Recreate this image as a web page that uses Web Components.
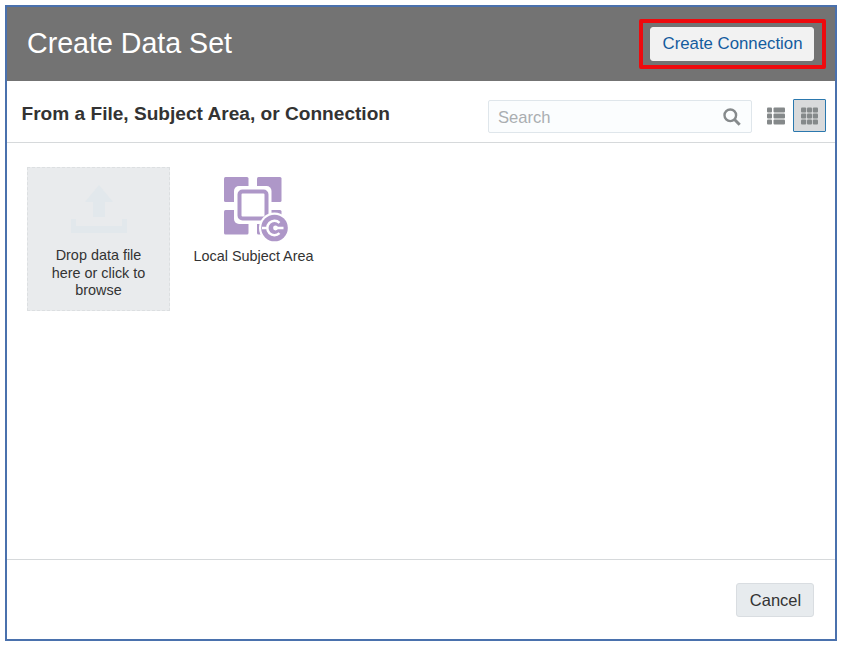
<!DOCTYPE html>
<html lang="en">
<head>
<meta charset="utf-8">
<title>Create Data Set</title>
<style>
html,body{margin:0;background:#fff}
body{width:842px;height:646px;overflow:hidden;font-family:"Liberation Sans",Arial,sans-serif;color:#333}
</style>
</head>
<body>
<data-dialog></data-dialog>
<script>
function define(name, html) {
  const template = document.createElement('template');
  template.innerHTML = html;
  customElements.define(name, class extends HTMLElement {
    constructor() {
      super();
      this.attachShadow({mode: 'open'}).append(template.content.cloneNode(true));
    }
  });
}

define('ui-button', `<style>
:host{display:block;flex:none}
button{display:block;box-sizing:border-box;width:100%;height:34px;padding:0 0 0 1px;margin:0;border:1px solid #d9dde1;border-radius:3px;background:#e7ebee;color:#333;font:16.5px/32px "Liberation Sans",Arial,sans-serif;text-align:center;white-space:nowrap}
:host([kind=light]) button{background:#f2f2f2;border-color:#f2f2f2;color:#145c9e;font-size:16.8px}
</style><button><slot></slot></button>`);

define('dialog-header', `<style>
:host{display:flex;box-sizing:border-box;height:74px;flex:none;background:#737373;justify-content:space-between;padding:12px 9px 0 20px}
h1{margin:0;font-weight:400;font-size:28.6px;line-height:34px;color:#fff;padding-top:7px;white-space:nowrap}
.mark{box-sizing:border-box;width:187px;height:50px;border:4px solid #ee0a0e;border-radius:2px;padding:4px 8px 0 7px}
</style><h1><slot></slot></h1><div class="mark"><slot name="action"></slot></div>`);

define('search-field', `<style>
:host{display:flex;box-sizing:border-box;width:264px;height:33px;border:1px solid #dfe6eb;border-radius:2px;background:#fbfdfe;align-items:center;justify-content:space-between;padding:0 10px 0 9px;color:#aaaeb1;font-size:16.6px}
span{padding-top:3px}
svg{display:block}
</style><span><slot></slot></span>
<svg width="18" height="18" viewBox="0 0 18 18" fill="none" stroke="#868a8c"><circle cx="7.3" cy="7.3" r="5.8" stroke-width="2.4"/><path d="M11.5 11.5l5.2 5.2" stroke-width="3"/></svg>`);

define('view-switch', `<style>
:host{display:flex}
div{box-sizing:border-box;width:33px;height:33px;border:1px solid transparent;display:grid;place-items:center;border-radius:1px}
.on{background:#d9dadb;border-color:#2b78ae}
svg{display:block}
</style>
<div><svg width="19" height="18" viewBox="0 0 19 18" fill="#85898a"><rect x="0" y="0.5" width="5" height="5" rx="1"/><rect x="6.5" y="0.5" width="11.5" height="5" rx="1"/><rect x="0" y="6.5" width="5" height="5" rx="1"/><rect x="6.5" y="6.5" width="11.5" height="5" rx="1"/><rect x="0" y="12.5" width="5" height="5" rx="1"/><rect x="6.5" y="12.5" width="11.5" height="5" rx="1"/></svg></div>
<div class="on"><svg width="18" height="18" viewBox="0 0 18 18" fill="#85898a"><rect x="0" y=".5" width="5.2" height="5" rx="1"/><rect x="6" y=".5" width="5" height="5" rx="1"/><rect x="11.8" y=".5" width="5.2" height="5" rx="1"/><rect x="0" y="6.5" width="5.2" height="5" rx="1"/><rect x="6" y="6.5" width="5" height="5" rx="1"/><rect x="11.8" y="6.5" width="5.2" height="5" rx="1"/><rect x="0" y="12.5" width="5.2" height="5" rx="1"/><rect x="6" y="12.5" width="5" height="5" rx="1"/><rect x="11.8" y="12.5" width="5.2" height="5" rx="1"/></svg></div>`);

define('source-toolbar', `<style>
:host{display:flex;box-sizing:border-box;height:62px;flex:none;border-bottom:1px solid #d6d9db;padding:18px 9px 0 14.5px}
h2{margin:0;flex:1;font-size:19.1px;line-height:30px;color:#333;white-space:nowrap}
search-field{margin:1px 8px 0 0}
</style><h2><slot></slot></h2><search-field>Search</search-field><view-switch></view-switch>`);

define('drop-tile', `<style>
:host{display:flex;box-sizing:border-box;width:143px;height:144px;border:1px dashed #dcdfe1;background:#e9ebed;flex-direction:column;align-items:center;padding:17px 20px 0;text-align:center;font-size:14.4px;line-height:17.6px}
svg{display:block;margin-bottom:14px;flex:none}
p{margin:0;white-space:nowrap}
</style><svg width="58" height="48" viewBox="0 0 58 48" fill="#e2e8ec"><path d="M29 0L43 17H35V32H23V17H15ZM1 34H6V41H52V34H57V48H1Z"/></svg><p><slot></slot></p>`);

define('source-tile', `<style>
:host{display:flex;width:143px;flex-direction:column;align-items:center;font-size:14.4px;line-height:18px;white-space:nowrap}
svg{display:block;margin:9px 0 5px 5px;flex:none}
</style><svg width="66" height="66" viewBox="0 0 66 66">
<g fill="#ae97c8"><rect x="1" y="1" width="24.5" height="25" rx="1.5"/><rect x="34" y="1" width="24.5" height="25" rx="1.5"/><rect x="1" y="34" width="24.5" height="24.5" rx="1.5"/><rect x="34" y="34" width="24.5" height="24.5" rx="1.5"/></g>
<rect x="11" y="10" width="37.5" height="38" rx="5" fill="#fff"/>
<rect x="16.5" y="15.5" width="27" height="27" rx="3" fill="#fff" stroke="#ae97c8" stroke-width="4"/>
<circle cx="51.5" cy="52" r="15.5" fill="#fff"/><circle cx="51.5" cy="52" r="13.3" fill="#ae97c8"/>
<path d="M56.5 46.8A7.2 7.2 0 1 0 56.5 57.2M39 52H44M52 52H60.5" fill="none" stroke="#fff" stroke-width="2.5"/><circle cx="52.5" cy="52" r="2.4" fill="#fff"/>
</svg><slot></slot>`);

define('data-dialog', `<style>
:host{display:flex;box-sizing:border-box;width:832px;height:636px;margin:5px;border:2px solid #4a71ad;flex-direction:column;background:#fff}
main{flex:1;display:flex;align-items:flex-start;gap:12px;padding:24px 20px 0}
footer{box-sizing:border-box;height:80px;border-top:1px solid #d6d9db;display:flex;justify-content:flex-end;padding:23px 21px 0}
.create{width:164px}.cancel{width:78px}
</style>
<dialog-header>Create Data Set<ui-button class="create" slot="action" kind="light">Create Connection</ui-button></dialog-header>
<source-toolbar>From a File, Subject Area, or Connection</source-toolbar>
<main><drop-tile>Drop data file<br>here or click to<br>browse</drop-tile><source-tile>Local Subject Area</source-tile></main>
<footer><ui-button class="cancel">Cancel</ui-button></footer>`);
</script>
</body>
</html>
